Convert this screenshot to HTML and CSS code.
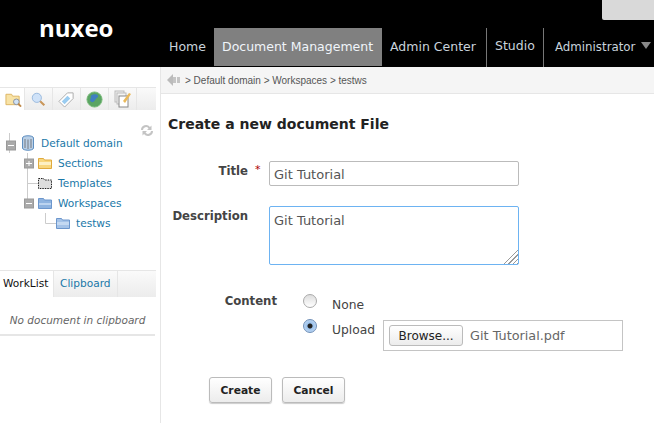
FILE: index.html
```html
<!DOCTYPE html>
<html lang="en">

<head>
  <meta charset="UTF-8">
  <title>nuxeo - Create a new document File</title>
  <link rel="stylesheet" href="styles.css">
</head>

<body>
  <header class="top">
    <div class="logo">nuxeo</div>
    <div class="top-right">
      <div class="login-box"></div>
      <nav class="nav">
        <a class="nav-item home">Home</a>
        <a class="nav-item current">Document Management</a>
        <a class="nav-item admin">Admin Center</a>
        <a class="nav-item studio">Studio</a>
        <a class="nav-item user">Administrator <span class="caret"></span></a>
      </nav>
    </div>
  </header>

  <div class="main">
    <aside class="side">
      <div class="side-tabs">
        <span class="side-tab active">
          <svg width="17" height="16" viewBox="0 0 18 16"><path d="M1 3h6l1 2h7v9H1z" fill="#f8e3a6" stroke="#dcb462"/><circle cx="12" cy="11" r="3" fill="#cfe2f6" stroke="#8a8f9a"/><path d="M14 13l3 3" stroke="#c08a4a" stroke-width="2"/></svg>
        </span>
        <span class="side-tab">
          <svg width="15" height="15" viewBox="0 0 18 18"><circle cx="7" cy="7" r="5.500" fill="#cfe2f8" stroke="#8fb2da"/><path d="M11 11l5 5" stroke="#c9965a" stroke-width="2.500"/></svg>
        </span>
        <span class="side-tab">
          <svg width="17" height="17" viewBox="0 0 18 18"><path d="M1 11L10 2h6v6l-9 9z" fill="#fff" stroke="#aaa"/><path d="M4 11l6-6 3 3-6 6z" fill="#9accf0"/></svg>
        </span>
        <span class="side-tab">
          <svg width="17" height="17" viewBox="0 0 18 18"><circle cx="9" cy="9" r="8" fill="#5aa463" stroke="#7abb7a"/><path d="M5 5c3-2 6-2 8 0-1 3-2 2-3 4s-3 4-5 2 1-3 0-6z" fill="#3f7fc0"/></svg>
        </span>
        <span class="side-tab">
          <svg width="18" height="18" viewBox="0 0 18 18"><rect x="1" y="1" width="9" height="11" fill="#eee" stroke="#bbb"/><rect x="3" y="3" width="9" height="11" fill="#f4f4f4" stroke="#bbb"/><rect x="5" y="6" width="9" height="11" fill="#fff" stroke="#888"/><path d="M9 11l6-8 2 1-6 9z" fill="#eab95a"/></svg>
        </span>
        <span class="side-tab rest"></span>
      </div>

      <div class="refresh">
        <svg width="14" height="13" viewBox="0 0 14 13"><path d="M1 6a5 5 0 0 1 9-3l1.500-1.500V6H7l1.500-1.500A3 3 0 0 0 3 6zM13 7a5 5 0 0 1-9 3l-1.500 1.500V7H7L5.500 8.500A3 3 0 0 0 11 7z" fill="#c4c4c4"/></svg>
      </div>

      <ul class="tree">
        <li class="tree-row">
          <svg class="tree-lines" width="21" height="20"><path d="M9.500 0v8M9.500 16v4" stroke="#ccc" fill="none"/><rect x="6.500" y="8" width="9" height="9" fill="#aaa" stroke="#999"/><path d="M8 12.500h6" stroke="#fff"/></svg>
          <svg class="tree-icon" width="14" height="16" viewBox="0 0 14 16"><path d="M1.500 3c0-3 11-3 11 0v10c0 3-11 3-11 0z" fill="#b9cfe6" stroke="#5f8fc0"/><path d="M4 4v9M7 4.500v9.500M10 4v9" stroke="#8c96a3" stroke-width="1.500"/></svg>
          <a class="tree-link">Default domain</a>
        </li>
        <li class="tree-row">
          <svg class="tree-lines" width="38" height="20"><path d="M27.500 0v6M27.500 15v5" stroke="#ccc" fill="none"/><rect x="24.500" y="6" width="9" height="9" fill="#aaa" stroke="#999"/><path d="M26 10.500h6M29 8v5" stroke="#fff"/></svg>
          <svg class="tree-icon" width="14" height="12" viewBox="0 0 14 12"><path d="M.5 1.500h5l1 1.500h7v8.500H.5z" fill="#f8d77e" stroke="#e0aa3e"/><path d="M1 5h12v3H1z" fill="#fdf0c4"/></svg>
          <a class="tree-link">Sections</a>
        </li>
        <li class="tree-row">
          <svg class="tree-lines" width="38" height="20"><path d="M27.500 0v20M27.500 10.500H38" stroke="#ccc" fill="none"/></svg>
          <svg class="tree-icon" width="14" height="12" viewBox="0 0 14 12"><path d="M.5 1.500h5l1 1.500h7v8.500H.5z" fill="#ddd" stroke="#222" stroke-dasharray="1.500 1"/></svg>
          <a class="tree-link">Templates</a>
        </li>
        <li class="tree-row">
          <svg class="tree-lines" width="38" height="20"><path d="M27.500 0v6" stroke="#ccc" fill="none"/><rect x="24.500" y="6" width="9" height="9" fill="#aaa" stroke="#999"/><path d="M26 10.500h6" stroke="#fff"/></svg>
          <svg class="tree-icon" width="14" height="12" viewBox="0 0 14 12"><path d="M.5 1.500h5l1 1.500h7v8.500H.5z" fill="#8fb4e0" stroke="#6c96cc"/><path d="M1 6h12v2H1z" fill="#bcd4f0"/></svg>
          <a class="tree-link">Workspaces</a>
        </li>
        <li class="tree-row">
          <svg class="tree-lines" width="56" height="20"><path d="M45.500 0v10.500H56" stroke="#ccc" fill="none"/></svg>
          <svg class="tree-icon" width="14" height="12" viewBox="0 0 14 12"><path d="M.5 1.500h5l1 1.500h7v8.500H.5z" fill="#a5c3e8" stroke="#6c96cc"/><path d="M1 5h12v3H1z" fill="#c4d9f2"/></svg>
          <a class="tree-link">testws</a>
        </li>
      </ul>

      <div class="work-tabs">
        <span class="work-tab active">WorkList</span>
        <a class="work-tab">Clipboard</a>
        <span class="work-tab rest"></span>
      </div>
      <p class="empty">No document in clipboard</p>
    </aside>

    <section class="content">
      <div class="crumbs">
        <svg width="13" height="12" viewBox="0 0 13 12"><path d="M6 0v12L0 6z" fill="#bbb"/><path d="M6 3h3v6H6zM10 3h3v6h-3z" fill="#c4c4c4"/></svg>
        <span>&gt; Default domain &gt; Workspaces &gt; testws</span>
      </div>

      <h1>Create a new document File</h1>

      <form class="form">
        <div class="row row-title">
          <label class="label">Title<span class="req">*</span></label>
          <input class="field" type="text" value="Git Tutorial">
        </div>
        <div class="row row-desc">
          <label class="label">Description</label>
          <textarea class="field area">Git Tutorial</textarea>
        </div>
        <div class="row row-content">
          <label class="label content-label">Content</label>
          <div class="choices">
            <div class="choice"><span class="radio"></span><span class="choice-text">None</span></div>
            <div class="choice upload">
              <span class="radio on"></span><span class="choice-text">Upload</span>
              <div class="filebox"><span class="btn browse">Browse...</span><span>Git Tutorial.pdf</span></div>
            </div>
          </div>
        </div>
        <div class="actions">
          <span class="btn action">Create</span>
          <span class="btn action">Cancel</span>
        </div>
      </form>
    </section>
  </div>
</body>

</html>
```

FILE: styles.css
```css
* {
  box-sizing: border-box;
}

html,
body {
  height: 100%;
}

body {
  margin: 0;
  overflow: hidden;
  font-family: "DejaVu Sans", Verdana, sans-serif;
  font-size: 12px;
  color: #444;
  background: #fff;
  display: flex;
  flex-direction: column;
}

/* header */
.top {
  height: 67px;
  flex: none;
  background: #000;
  display: flex;
}

.logo {
  width: 161px;
  flex: none;
  padding: 13px 0 0 39px;
  color: #fff;
  font-family: "Open Sans", sans-serif;
  font-size: 24px;
  font-weight: 700;
  line-height: 30px;
}

.top-right {
  flex: 1;
  min-width: 0;
  display: flex;
  flex-direction: column;
}

.login-box {
  width: 52px;
  height: 20px;
  margin: 0 0 8px auto;
  background: #d9d9d9;
  border-bottom-left-radius: 2px;
}

.nav {
  height: 39px;
  display: flex;
  font-size: 12.500px;
  color: #c9d3dc;
}

.nav-item {
  flex: none;
  line-height: 38px;
  padding: 0 8px;
  white-space: nowrap;
}

.home {
  width: 53px;
}

.current {
  width: 168px;
  height: 38px;
  background: #808080;
  color: #f0f5fa;
}

.admin {
  width: 104px;
}

.studio {
  width: 57px;
  border-left: 1px solid #777;
  line-height: 36px;
}

.user {
  width: 111px;
  border-left: 1px solid #777;
  padding: 0 0 0 11px;
  font-size: 11.800px;
  line-height: 39px;
}

.caret {
  display: inline-block;
  margin-left: 2px;
  border-left: 5px solid transparent;
  border-right: 5px solid transparent;
  border-top: 7px solid #888;
  vertical-align: 2px;
}

/* left column */
.main {
  flex: 1;
  display: flex;
  min-height: 0;
}

.side {
  width: 161px;
  flex: none;
  border-right: 1px solid #e6e6e6;
  padding-top: 20px;
}

.side-tabs,
.work-tabs {
  width: 156px;
  display: flex;
  border-top: 1px solid #e6e6e6;
}

.side-tabs {
  height: 23px;
  padding-left: 3px;
}

.side-tab {
  width: 28px;
  height: 22px;
  flex: none;
  display: flex;
  align-items: center;
  justify-content: center;
  border-right: 1px solid #e6e6e6;
  background: linear-gradient(#fafafa, #ececec);
}

.side-tab.active {
  width: 22px;
  background: #fff;
}

.side-tab.rest,
.work-tab.rest {
  flex: 1;
  border-right: 0;
}

.refresh {
  height: 26px;
  padding: 14px 0 0 140px;
  line-height: 0;
}

.tree {
  list-style: none;
  margin: -3px 0 0;
  padding: 0;
}

.tree-row {
  height: 20px;
  display: flex;
  align-items: center;
  font-size: 10.600px;
}

.tree-lines {
  flex: none;
}

.tree-icon {
  flex: none;
  margin-right: 6px;
}

.tree-link {
  color: #1a78a8;
  white-space: nowrap;
}

.work-tabs {
  margin-top: 37px;
  height: 27px;
  font-size: 10.600px;
}

.work-tab {
  height: 26px;
  padding: 0 6px 0 3px;
  line-height: 25px;
  color: #1a78a8;
  border-right: 1px solid #e6e6e6;
  background: linear-gradient(#fafafa, #ececec);
}

.work-tab.active {
  width: 54px;
  color: #111;
  background: #fff;
}

.work-tab:nth-child(2) {
  width: 64px;
  padding-left: 6px;
}

.empty {
  width: 155px;
  height: 39px;
  margin: 0;
  padding-top: 17px;
  border-bottom: 2px solid #e6e6e6;
  text-align: center;
  font-size: 10.500px;
  font-style: italic;
  color: #666;
  white-space: nowrap;
}

/* right column */
.content {
  flex: 1;
  min-width: 0;
}

.crumbs {
  height: 27px;
  padding: 0 0 0 6px;
  display: flex;
  align-items: center;
  gap: 5px;
  background: #f5f5f5;
  border-bottom: 1px solid #e6e6e6;
  font-family: "Liberation Sans", Arial, sans-serif;
  font-size: 10px;
  color: #555;
}

h1 {
  margin: 21px 0 0 7px;
  font-size: 14px;
  line-height: 18px;
  color: #222;
}

.form {
  margin-top: 28px;
}

.row {
  display: flex;
  align-items: flex-start;
}

.label {
  width: 87px;
  padding-top: 3px;
  display: flex;
  justify-content: flex-end;
  font-weight: 700;
  font-size: 11.700px;
  color: #444;
}

.req {
  width: 0;
  margin: -1px -7px 0 7px;
  font-size: 11px;
  font-weight: 400;
  color: #a00;
}

.field {
  width: 250px;
  height: 25px;
  margin-left: 21px;
  padding: 3px 4px 1px;
  border: 1px solid #bbb;
  border-radius: 2px;
  font-family: inherit;
  font-size: 13px;
  color: #555;
  background: #fff;
}

.row-desc {
  margin-top: 20px;
}

.area {
  height: 59px;
  padding-top: 6px;
  border-color: #6db3f2;
  outline: none;
  resize: both;
}

.area::-webkit-resizer {
  background: linear-gradient(135deg, #fff 50%, transparent 50%), repeating-linear-gradient(135deg, transparent 0 2px, #999 2px 3px);
}

.row-content {
  margin-top: 29px;
}

.content-label {
  width: 116px;
  padding-top: 0;
}

.choices {
  margin-left: 26px;
}

.choice {
  display: flex;
  align-items: flex-start;
  gap: 15px;
  font-size: 12.300px;
  color: #444;
}

.choice-text {
  padding-top: 4px;
}

.radio {
  width: 14px;
  height: 14px;
  flex: none;
  border: 1px solid #aaa;
  border-radius: 50%;
  background: linear-gradient(#ddd, #fff);
}

.radio.on {
  border-color: #6f8fb8;
  background: radial-gradient(circle, #222 0 2px, #9cc2ec 3px, #cfe2f6);
}

.upload {
  margin-top: 7px;
}

.filebox {
  width: 240px;
  height: 31px;
  margin: 1px 0 0 -7px;
  padding-left: 5px;
  display: flex;
  align-items: center;
  gap: 7px;
  border: 1px solid #c4c4c4;
  font-size: 12.800px;
  color: #666;
}

.btn {
  display: inline-flex;
  align-items: center;
  justify-content: center;
  border: 1px solid #bbb;
  border-radius: 3px;
  background: linear-gradient(#fff, #ececec);
  color: #222;
}

.browse {
  width: 74px;
  height: 21px;
  font-size: 12px;
}

.actions {
  display: flex;
  gap: 10px;
  margin: 26px 0 0 48px;
}

.action {
  width: 63px;
  height: 26px;
  font-size: 10.700px;
  font-weight: 700;
  box-shadow: 0 1px 1px #ccc;
}
```
